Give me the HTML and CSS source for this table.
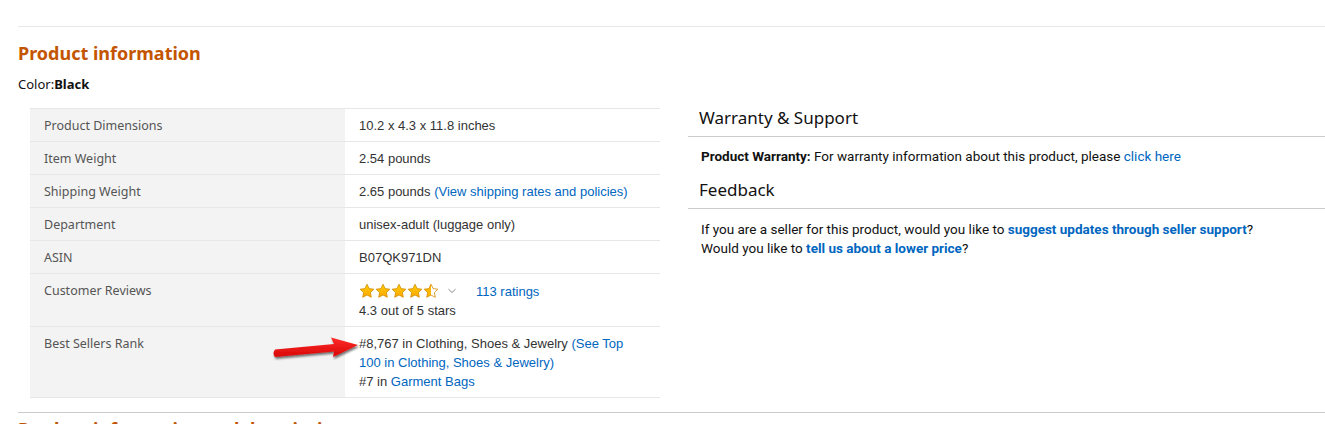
FILE: index.html
```html
<!DOCTYPE html>
<html>
<head>
<meta charset="utf-8">
<link rel="stylesheet" href="styles.css">
</head>
<body>
<div class="page">
  <hr class="rule-top">
  <div class="main">
    <section class="left">
      <h2 class="title">Product information</h2>
      <div class="color">Color:<b>Black</b></div>
      <table class="specs">
        <tr><th>Product Dimensions</th><td>10.2 x 4.3 x 11.8 inches</td></tr>
        <tr><th>Item Weight</th><td>2.54 pounds</td></tr>
        <tr><th>Shipping Weight</th><td>2.65 pounds <a>(View shipping rates and policies)</a></td></tr>
        <tr><th>Department</th><td>unisex-adult (luggage only)</td></tr>
        <tr><th>ASIN</th><td>B07QK971DN</td></tr>
        <tr class="tall"><th>Customer Reviews</th><td>
          <div class="rating">
            <span class="stars">
              <svg width="80" height="16" viewBox="0 0 80 16">
                <defs>
                  <linearGradient id="g" x1="0" y1="0" x2="0" y2="1">
                    <stop offset="0" stop-color="#ffce00"/>
                    <stop offset="1" stop-color="#ffa700"/>
                  </linearGradient>
                  <linearGradient id="h" x1="0" y1="0" x2="1" y2="0">
                    <stop offset="0.5" stop-color="#ffb800"/>
                    <stop offset="0.5" stop-color="#ffffff"/>
                  </linearGradient>
                  <path id="s" d="M8 1.2 L10.1 5.6 L14.9 6.2 L11.4 9.5 L12.3 14.3 L8 12 L3.7 14.3 L4.6 9.5 L1.1 6.2 L5.9 5.6 Z"/>
                </defs>
                <use href="#s" x="0" fill="url(#g)" stroke="#d38b00" stroke-width="0.8"/>
                <use href="#s" x="16" fill="url(#g)" stroke="#d38b00" stroke-width="0.8"/>
                <use href="#s" x="32" fill="url(#g)" stroke="#d38b00" stroke-width="0.8"/>
                <use href="#s" x="48" fill="url(#g)" stroke="#d38b00" stroke-width="0.8"/>
                <use href="#s" x="64" fill="url(#h)" stroke="#d38b00" stroke-width="0.8"/>
              </svg>
            </span>
            <svg class="chev" width="10" height="6" viewBox="0 0 10 6"><path d="M1.5 1.2 L5 4.5 L8.5 1.2" fill="none" stroke="#888" stroke-width="1"/></svg>
            <a class="count">113 ratings</a>
          </div>
          <div>4.3 out of 5 stars</div>
        </td></tr>
        <tr class="rank"><th>Best Sellers Rank</th><td>
          <span class="arrow-wrap">
            <svg class="arrow" width="92" height="30" viewBox="0 0 92 30">
              <defs>
                <filter id="sh" x="-10%" y="-30%" width="130%" height="180%">
                  <feDropShadow dx="1" dy="2" stdDeviation="1.2" flood-color="#000" flood-opacity="0.55"/>
                </filter>
                <linearGradient id="ar" x1="0" y1="0" x2="0" y2="1">
                  <stop offset="0" stop-color="#ff2a2a"/>
                  <stop offset="1" stop-color="#d80808"/>
                </linearGradient>
              </defs>
              <path d="M5 16.5 L64 11 L61 4.5 L88 12 L63 24 L64 18.5 L5 24 Q2 20.3 5 16.5 Z" fill="url(#ar)" filter="url(#sh)"/>
            </svg>
          </span>#8,767 in Clothing, Shoes &amp; Jewelry <a>(See Top 100 in Clothing, Shoes &amp; Jewelry)</a><br>#7 in <a>Garment Bags</a>
        </td></tr>
      </table>
    </section>
    <section class="right">
      <h3 class="sub">Warranty &amp; Support</h3>
      <p class="para"><b>Product Warranty:</b> For warranty information about this product, please <a>click here</a></p>
      <h3 class="sub">Feedback</h3>
      <p class="para fb">If you are a seller for this product, would you like to <a class="bold">suggest updates through seller support</a>?<br>Would you like to <a class="bold">tell us about a lower price</a>?</p>
    </section>
  </div>
  <hr class="rule-bottom">
  <h2 class="title cut">Product information and description</h2>
</div>
</body>
</html>
```
FILE: styles.css
```css
html, body {
  margin: 0;
  padding: 0;
  background: #fff;
}
body {
  font-family: "Noto Sans", "Open Sans", Arial, sans-serif;
  color: #111;
  font-size: 13px;
  overflow: hidden;
  height: 424px;
}
.page {
  padding-left: 18px;
  padding-top: 26px;
}
hr {
  border: 0;
  margin: 0;
  height: 0;
}
.rule-top {
  border-top: 1px solid #e7e7e7;
}
.rule-bottom {
  border-top: 1px solid #cccccc;
  margin-top: 14px;
}
a {
  color: #0066c0;
  text-decoration: none;
}
.title {
  color: #c45500;
  font-size: 18px;
  font-weight: 700;
  margin: 0;
  line-height: 24px;
  padding-top: 14px;
}
.title.cut {
  padding-top: 4px;
}
.color {
  margin-top: 10px;
  line-height: 18px;
  font-size: 13px;
}
.color b {
  font-weight: 700;
}
.main {
  display: flex;
}
.left {
  width: 642px;
  flex: none;
}
.specs {
  margin-left: 12px;
  margin-top: 15px;
  border-collapse: collapse;
  width: 630px;
  border-top: 1px solid #e7e7e7;
  border-bottom: 1px solid #e7e7e7;
}
.specs tr {
  border-bottom: 1px solid #e7e7e7;
}
.specs th {
  background: #f3f3f3;
  width: 315px;
  text-align: left;
  font-weight: 400;
  color: #555;
  font-size: 12.5px;
  padding: 7px 14px 6px 14px;
  vertical-align: top;
  line-height: 19px;
  box-sizing: border-box;
}
.specs td {
  font-family: "Liberation Sans", Arial, sans-serif;
  color: #333;
  font-size: 13px;
  line-height: 19px;
  padding: 7px 14px 6px 14px;
  vertical-align: top;
}
.rating {
  display: flex;
  align-items: center;
  height: 20px;
}
.stars {
  display: flex;
  width: 80px;
}
.chev {
  margin-left: 8px;
}
.count {
  margin-left: 19px;
}
.arrow-wrap {
  position: relative;
}
.arrow {
  position: absolute;
  left: -89px;
  top: -3px;
}
.right {
  flex: 1;
  margin-left: 28px;
  padding-top: 79px;
}
.sub {
  font-weight: 400;
  font-size: 17px;
  line-height: 24px;
  margin: 0;
  padding: 0 0 6px 11px;
  border-bottom: 1px solid #ccc;
  color: #111;
}
.para {
  margin: 0;
  padding: 10px 13px 12px 13px;
  line-height: 19px;
  font-family: "Roboto", "Noto Sans", sans-serif;
  font-size: 13.5px;
  color: #111;
}
.para b, .para .bold {
  font-weight: 700;
}
.para.fb {
  padding-top: 11px;
}
```
